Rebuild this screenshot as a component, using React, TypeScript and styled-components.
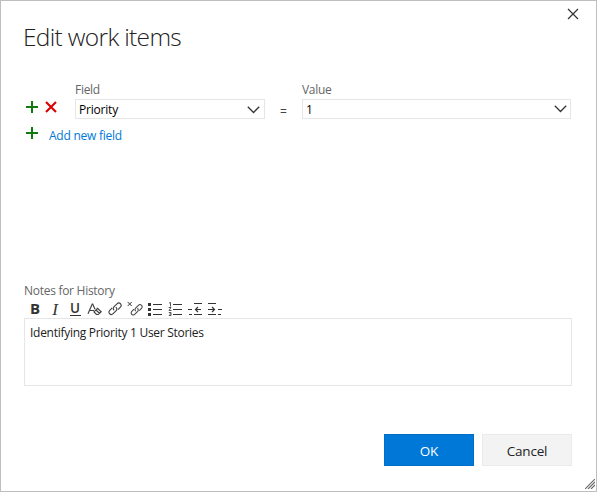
import React from "react";
import styled, { createGlobalStyle } from "styled-components";

const GlobalStyle = createGlobalStyle`
  * { box-sizing: border-box; }
  body { margin: 0; background: #fff; }
  button { font: inherit; padding: 0; margin: 0; border: 0; background: none; cursor: pointer; }
  svg { display: block; flex: none; }
`;

const Dialog = styled.section`
  position: relative;
  display: flex;
  flex-direction: column;
  width: 597px;
  height: 492px;
  padding: 7px 24px 25px 23px;
  border: 1px solid #bebebe;
  background: #fff;
  color: #222;
  font: 12px/16px "Open Sans", "Noto Sans", sans-serif;
`;

const Header = styled.header`
  display: flex;
  justify-content: space-between;
  height: 73px;
  margin-right: -7px;
`;

const Title = styled.h1`
  margin: 12px 0 0 -1px;
  font-size: 24.5px;
  font-weight: 300;
  line-height: 34px;
  letter-spacing: -0.68px;
  color: #222;
`;

const CloseButton = styled.button`
  width: 12px;
  height: 12px;
`;

const FieldGrid = styled.div`
  display: grid;
  grid-template-columns: 51px 190px 37px 269px;
  grid-template-rows: 18px 20px;
  height: 38px;
`;

const Label = styled.label<{ $column?: number }>`
  grid-column: ${(p) => p.$column ?? "auto"};
  grid-row: 1;
  color: #666;
  line-height: 18px;
  letter-spacing: -0.28px;
`;

const RowActions = styled.div`
  grid-column: 1;
  grid-row: 2;
  display: flex;
  gap: 7px;
  padding: 2px 0 0 2px;
`;

const Select = styled.button<{ $column: number }>`
  grid-column: ${(p) => p.$column};
  grid-row: 2;
  display: flex;
  align-items: center;
  justify-content: space-between;
  height: 20px;
  padding: 1px 4px 0 3px;
  border: 1px solid #e6e6e6;
  background: #fff;
  color: #000;
  letter-spacing: -0.2px;
`;

const Operator = styled.span`
  grid-column: 3;
  grid-row: 2;
  padding: 5px 0 0 15px;
  color: #444;
`;

const AddRow = styled.div`
  display: flex;
  gap: 11px;
  height: 40px;
  padding: 8px 0 0 2px;
`;

const AddLink = styled.button`
  height: 16px;
  margin-top: 1px;
  color: #0078d7;
  letter-spacing: -0.25px;
`;

const Notes = styled.div`
  display: flex;
  flex-direction: column;
  margin-top: auto;
`;

const Toolbar = styled.div`
  display: flex;
  height: 18px;
  gap: 4px;
  padding: 1px 0 0 3px;
`;

const Tool = styled.button`
  width: 16px;
  height: 16px;
  color: #333;
`;

const Letter = styled.span<{ $kind: "bold" | "italic" | "underline" }>`
  display: block;
  height: 16px;
  text-align: center;
  font-size: 15px;
  line-height: 15px;
  font-family: ${(p) => (p.$kind === "italic" ? '"Liberation Serif", serif' : '"Open Sans", sans-serif')};
  font-style: ${(p) => (p.$kind === "italic" ? "italic" : "normal")};
  font-weight: ${(p) => (p.$kind === "bold" ? 700 : p.$kind === "underline" ? 600 : 400)};
  ${(p) => p.$kind === "italic" && "font-size: 17px; line-height: 17px;"}
  ${(p) => p.$kind === "underline" && "width: 11px; height: 15px; margin: 0 auto 1px; font-size: 13.5px; line-height: 14px; border-bottom: 1px solid #333;"}
`;

const Editor = styled.div`
  height: 68px;
  padding: 6px 5px;
  border: 1px solid #e6e6e6;
  color: #222;
  letter-spacing: -0.28px;
`;

const Footer = styled.footer`
  display: flex;
  justify-content: flex-end;
  gap: 8px;
  margin-top: 48px;
`;

const Action = styled.button<{ $primary?: boolean }>`
  width: 90px;
  height: 32px;
  padding-top: 1px;
  border: 1px solid ${(p) => (p.$primary ? "#006fc9" : "#eaeaea")};
  background: ${(p) => (p.$primary ? "#0078d7" : "#f3f3f3")};
  color: ${(p) => (p.$primary ? "#fff" : "#222")};
  font-size: 13.5px;
  letter-spacing: -0.2px;
`;

const Grip = styled.svg`
  position: absolute;
  right: 1px;
  bottom: 2px;
`;

const Plus = () => (
  <svg width="12" height="12">
    <path d="M6 0V12M0 6H12" stroke="#107c10" strokeWidth="2" />
  </svg>
);

const Remove = () => (
  <svg width="12" height="12">
    <path d="M1 1L11 11M11 1L1 11" stroke="#dc0000" strokeWidth="2.1" />
  </svg>
);

const Chevron = styled(({ className }: { className?: string; $raised?: boolean }) => (
  <svg className={className} width="13" height="8">
    <path d="M.8 .8L6.5 6.5L12.2 .8" fill="none" stroke="#333" strokeWidth="1.3" />
  </svg>
))`
  margin: ${(p) => (p.$raised ? "-2px -1px 0 0" : "0")};
`;

const LinkShape = () => (
  <g fill="none" stroke="#444" strokeWidth="1.15">
    <path d="M7.2 9.3C5.8 8.2 6.1 6.7 7.1 5.7L10 2.8C12.3.5 15.8 3.8 13.4 6.2L11 8.6" />
    <path d="M8.8 6.1C10.3 7.2 10.1 8.7 9 9.8L6.1 12.7C3.8 15 .4 11.7 2.7 9.4L5.2 6.9" />
  </g>
);

const tools: { name: string; letter?: string; kind?: "bold" | "italic" | "underline"; art?: React.ReactNode }[] = [
  { name: "Bold", letter: "B", kind: "bold" },
  { name: "Italic", letter: "I", kind: "italic" },
  { name: "Underline", letter: "U", kind: "underline" },
  {
    name: "Clear formatting",
    art: (
      <g fill="none" stroke="#444" strokeWidth="1.2">
        <path d="M1 12.7L5.2 3H5.7L8 8.3M2.5 9.5H7" />
        <path d="M7 10.9L10.5 7.3L14.2 10.7L11.3 13.5H9.5ZM8.9 9L12.5 12.3" />
      </g>
    ),
  },
  { name: "Insert link", art: <LinkShape /> },
  {
    name: "Remove link",
    art: (
      <g>
        <g transform="translate(2.4 1.8) scale(.9)"><LinkShape /></g>
        <path d="M.7 1L4.7 5M4.7 1L.7 5" stroke="#333" />
      </g>
    ),
  },
  {
    name: "Bulleted list",
    art: (
      <g fill="#333">
        <path d="M1 2h3v3H1zM1 7h3v3H1zM1 12h3v3H1z" />
        <path d="M6 3h9v1H6zM6 8h9v1H6zM6 13h9v1H6z" />
      </g>
    ),
  },
  {
    name: "Numbered list",
    art: (
      <g>
        <path d="M6 3h9v1H6zM6 8h9v1H6zM6 13h9v1H6z" fill="#333" />
        <path d="M2 2L3.5 1.5V5.5M1.7 6.5H4L2 9.5H4.5M1.8 11.5H4V14.5H1.8M2.3 13H4" fill="none" stroke="#444" strokeWidth=".9" />
      </g>
    ),
  },
  {
    name: "Decrease indent",
    art: (
      <g fill="none" stroke="#333">
        <path d="M7 2.5H15M1 8.5H5M8.5 8.5H14M2 13.5H5M7 13.5H15" />
        <path d="M11 6L8.5 8.5L11 11" strokeWidth="1.2" />
      </g>
    ),
  },
  {
    name: "Increase indent",
    art: (
      <g fill="none" stroke="#333">
        <path d="M1 2.5H9M1 8.5H7.5M11 8.5H15M1 13.5H9M11 13.5H14" />
        <path d="M5 6L7.5 8.5L5 11" strokeWidth="1.2" />
      </g>
    ),
  },
];

export default function App() {
  return (
    <>
      <GlobalStyle />
      <Dialog role="dialog" aria-label="Edit work items">
        <Header>
          <Title>Edit work items</Title>
          <CloseButton aria-label="Close">
            <svg width="12" height="12">
              <path d="M1 1L11 11M11 1L1 11" stroke="#333" strokeWidth="1.2" />
            </svg>
          </CloseButton>
        </Header>
        <FieldGrid>
          <Label $column={2}>Field</Label>
          <Label $column={4}>Value</Label>
          <RowActions>
            <Plus />
            <Remove />
          </RowActions>
          <Select $column={2}>Priority<Chevron /></Select>
          <Operator>=</Operator>
          <Select $column={4}>1<Chevron $raised /></Select>
        </FieldGrid>
        <AddRow>
          <Plus />
          <AddLink>Add new field</AddLink>
        </AddRow>
        <Notes>
          <Label>Notes for History</Label>
          <Toolbar>
            {tools.map((tool) => (
              <Tool key={tool.name} aria-label={tool.name}>
                {tool.kind ? (
                  <Letter $kind={tool.kind}>{tool.letter}</Letter>
                ) : (
                  <svg width="16" height="16">{tool.art}</svg>
                )}
              </Tool>
            ))}
          </Toolbar>
          <Editor>Identifying Priority 1 User Stories</Editor>
        </Notes>
        <Footer>
          <Action $primary>OK</Action>
          <Action>Cancel</Action>
        </Footer>
        <Grip width="10" height="10">
          <path d="M0 10L10 0M3 10L10 3M6 10L10 6" stroke="#666" strokeWidth="1.1" />
        </Grip>
      </Dialog>
    </>
  );
}
